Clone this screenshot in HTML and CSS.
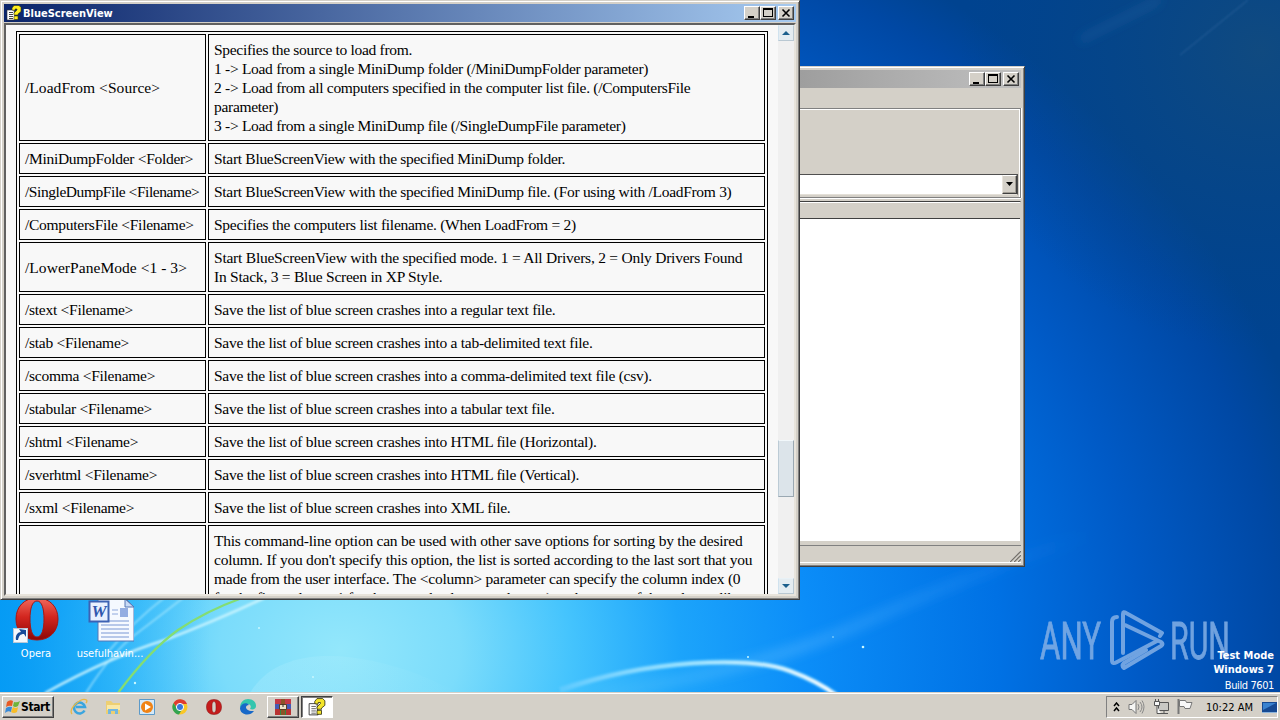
FILE: index.html
```html
<!DOCTYPE html>
<html lang="en">
<head>
  <meta charset="UTF-8" />
  <title>BlueScreenView</title>
  <link rel="stylesheet" href="styles.css">
</head>
<body>
  <div class="desktop">
    <svg class="wallpaper" viewBox="0 0 1280 720">
      <defs>
        <radialGradient id="sky" gradientUnits="userSpaceOnUse" cx="340" cy="650" r="1000" gradientTransform="translate(0 117) scale(1 .82)">
          <stop offset="0" stop-color="#93e7fb"/>
          <stop offset=".12" stop-color="#7bdcfb"/>
          <stop offset=".23" stop-color="#45c4fd"/>
          <stop offset=".34" stop-color="#1ca4fb"/>
          <stop offset=".47" stop-color="#0b8df8"/>
          <stop offset=".66" stop-color="#0071e4"/>
          <stop offset=".8" stop-color="#005ac6"/>
          <stop offset=".94" stop-color="#0048a4"/>
          <stop offset="1" stop-color="#004390"/>
        </radialGradient>
        <linearGradient id="left" x1="0" x2="1" y1="0" y2="0">
          <stop offset="0" stop-color="#0099f3" stop-opacity=".8"/>
          <stop offset="1" stop-color="#0099f3" stop-opacity="0"/>
        </linearGradient>
        <radialGradient id="corner" gradientUnits="userSpaceOnUse" cx="1260" cy="50" r="300">
          <stop offset="0" stop-color="#104a80"/>
          <stop offset="1" stop-color="#044485" stop-opacity="0"/>
        </radialGradient>
        <linearGradient id="ray" x1="0" x2="1" y1="0" y2="0">
          <stop offset="0" stop-color="#9de6ff" stop-opacity=".05"/>
          <stop offset=".4" stop-color="#5ab8ff" stop-opacity=".35"/>
          <stop offset="1" stop-color="#3aa0ff" stop-opacity="0"/>
        </linearGradient>
        <linearGradient id="arc" x1="0" x2="1" y1="0" y2="0">
          <stop offset="0" stop-color="#fff" stop-opacity="0"/>
          <stop offset=".4" stop-color="#c8f6ff" stop-opacity=".6"/>
          <stop offset="1" stop-color="#fff"/>
        </linearGradient>
        <linearGradient id="hill" x1="0" x2="1" y1="0" y2="0">
          <stop offset="0" stop-color="#c6f4ff" stop-opacity=".22"/>
          <stop offset="1" stop-color="#c6f4ff" stop-opacity="0"/>
        </linearGradient>
        <filter id="soft"><feGaussianBlur stdDeviation="1"/></filter>
        <filter id="softer" x="-20%" y="-50%" width="140%" height="200%"><feGaussianBlur stdDeviation="5"/></filter>
      </defs>
      <rect width="1280" height="720" fill="url(#sky)"/>
      <rect width="210" height="720" fill="url(#left)"/>
      <rect x="900" width="380" height="360" fill="url(#corner)"/>
      <path d="M600 694Q760 670 865 622T1090 535" fill="none" stroke="url(#ray)" stroke-width="13" filter="url(#softer)"/>
      <path d="M1180 55L1248 0" stroke="#4a7cb4" stroke-opacity=".5" filter="url(#soft)"/>
      <path d="M1080 40L1160 0" stroke="#2a66a8" stroke-opacity=".4" stroke-width="6" filter="url(#softer)"/>
      <g fill="none" filter="url(#soft)">
        <path d="M45 693Q110 657 165 640Q215 621 264 598" stroke="#d5f8ff" stroke-opacity=".85" stroke-width="2.5"/>
        <path d="M86 693Q112 652 136 634Q165 612 183 598M108 652Q135 620 164 598" stroke="#c0f2ff" stroke-opacity=".7" stroke-width="1.5"/>
        <path d="M560 690C650 659 748 656 790 671Q817 681 836 695" stroke="#61ccff" stroke-opacity=".8" stroke-width="6"/>
        <path d="M560 690C650 659 748 656 790 671Q817 681 836 695" stroke="url(#arc)" stroke-width="3"/>
      </g>
      <path d="M250 693C275 650 340 645 420 675L460 693Z" fill="url(#hill)"/>
      <path d="M118 693Q150 650 178 630Q206 611 242 598" fill="none" stroke="#84dd72" stroke-width="2.2"/>
      <g fill="#c8f7ff">
        <circle cx="135" cy="683" r="1.2"/><circle cx="313" cy="677" r="1"/><circle cx="259" cy="628" r="1"/>
        <circle cx="748" cy="657" r="1"/><circle cx="863" cy="647" r="1.3"/><circle cx="833" cy="637" r=".7"/>
      </g>
    </svg>

    <div class="shortcut opera">
      <svg width="48" height="48" viewBox="0 0 48 48">
        <defs>
          <linearGradient id="red" x1="0" x2="0" y1="0" y2="1">
            <stop offset="0" stop-color="#f06a5e"/><stop offset=".45" stop-color="#d3261f"/><stop offset="1" stop-color="#8d0606"/>
          </linearGradient>
        </defs>
        <path fill="url(#red)" stroke="#a51715" fill-rule="evenodd" d="M25 3c13 0 21 9 21 21s-8 21-21 21S4 36 4 24 12 3 25 3zm0 3c-5 0-7 8-7 18s2 18 7 18 7-8 7-18-2-18-7-18z"/>
        <rect x="1.500" y="33.500" width="14" height="14" fill="#f4f8fc" stroke="#b8c8d8"/>
        <path d="M4 45c-1-5 2-8 5-8l-2-3 7 1v7l-2-3c-4 0-5 2-6 6z" fill="#174b9a"/>
      </svg>
      <span>Opera</span>
    </div>
    <div class="shortcut word">
      <svg width="48" height="48" viewBox="0 0 48 48">
        <path d="M12 4h28l8 8v34H12z" fill="#f5f9ff" stroke="#5676b4"/>
        <path d="M39 4v8h9z" fill="#c8daf5" stroke="#5676b4"/>
        <path d="M15 26h28M15 30h28M15 34h28M15 38h28M15 42h28" stroke="#7997d4"/>
        <path d="M26 15h6M26 19h6" stroke="#8ea8dc"/>
        <rect x="34" y="13" width="8" height="9" fill="#93ade2"/>
        <rect x="3.500" y="6.500" width="19" height="20" fill="#e8f0ff" stroke="#3c62b4" stroke-width="2"/>
        <text x="13" y="22" text-anchor="middle" class="w-mark">W</text>
      </svg>
      <span>usefulhavin...</span>
    </div>

    <svg class="watermark" width="200" height="64" viewBox="0 0 200 64">
      <text x="2" y="50" textLength="61" lengthAdjust="spacingAndGlyphs">ANY</text>
      <text x="132" y="50" textLength="60" lengthAdjust="spacingAndGlyphs">RUN</text>
      <g fill="none" stroke="#84b0e6" stroke-width="4" stroke-linejoin="round" stroke-linecap="round">
        <path d="M79 8q-5 0-5 5v38q0 5 5 2l40-21"/>
        <path d="M85 44V5q0-3 3-1l36 20-2 3M87 16l36 17q3 2 0 4L86 59q-3-2 0-5l22-13"/>
      </g>
    </svg>
    <div class="build"><b>Test Mode</b><b>Windows 7</b><span>Build 7601</span></div>

    <div class="window back">
      <div class="titlebar">
        <div class="caption">
          <i class="btn"><svg width="12" height="10"><path d="M2 8h6v2H2z"/></svg></i>
          <i class="btn"><svg width="12" height="10"><path fill-rule="evenodd" d="M1 0h10v9H1zM2 2v6h8V2z"/></svg></i>
          <i class="btn close"><svg width="12" height="10"><path d="M2.500 1.500l7 7M9.500 1.500l-7 7" stroke="#000" stroke-width="1.600"/></svg></i>
        </div>
      </div>
      <div class="toolbox">
        <div class="combo"><i class="drop"><svg width="9" height="5"><path d="M1 0h7L4.500 4z"/></svg></i></div>
      </div>
      <div class="list"><div class="list-head"></div></div>
      <div class="status">
        <svg width="13" height="13"><path d="M1 13L13 1M5 13l8-8M9 13l4-4" stroke="#fff"/><path d="M2 13L13 2M6 13l7-7M10 13l3-3" stroke="#77736c" stroke-width="1.400"/></svg>
      </div>
    </div>

    <div class="window main">
      <div class="titlebar">
        <svg class="help-icon" width="16" height="16" viewBox="0 0 16 16"><path d="M1 5h7l1 10H1z" fill="#fff" stroke="#333" stroke-width=".6"/><path d="M3 7.500h4M3 9.500h4M3 11.500h4M3 13.500h4" stroke="#444"/><path d="M6 5V3l2-2.500h5l2 2v4l-3 2.500v1H8V8l3-3V4H9v1.500zM8 11h4v3.500H8z" fill="#ffef20" stroke="#3c3900" stroke-width=".6"/></svg>
        <span class="title">BlueScreenView</span>
        <div class="caption">
          <i class="btn"><svg width="12" height="10"><path d="M2 8h6v2H2z"/></svg></i>
          <i class="btn"><svg width="12" height="10"><path fill-rule="evenodd" d="M1 0h10v9H1zM2 2v6h8V2z"/></svg></i>
          <i class="btn close"><svg width="12" height="10"><path d="M2.500 1.500l7 7M9.500 1.500l-7 7" stroke="#000" stroke-width="1.600"/></svg></i>
        </div>
      </div>
      <div class="client">
        <div class="page">
          <table>
            <tr class="tight"><td class="loose">/LoadFrom &lt;Source&gt;</td><td>Specifies the source to load from.<br>1 -&gt; Load from a single MiniDump folder (/MiniDumpFolder parameter)<br>2 -&gt; Load from all computers specified in the computer list file. (/ComputersFile<br>parameter)<br>3 -&gt; Load from a single MiniDump file (/SingleDumpFile parameter)</td></tr>
            <tr class="tight"><td>/MiniDumpFolder &lt;Folder&gt;</td><td>Start BlueScreenView with the specified MiniDump folder.</td></tr>
            <tr class="tight"><td class="tighter">/SingleDumpFile &lt;Filename&gt;</td><td>Start BlueScreenView with the specified MiniDump file. (For using with /LoadFrom 3)</td></tr>
            <tr><td>/ComputersFile &lt;Filename&gt;</td><td>Specifies the computers list filename. (When LoadFrom = 2)</td></tr>
            <tr class="wide"><td class="loose">/LowerPaneMode &lt;1 - 3&gt;</td><td>Start BlueScreenView with the specified mode. 1 = All Drivers, 2 = Only Drivers Found<br>In Stack, 3 = Blue Screen in XP Style.</td></tr>
            <tr><td>/stext &lt;Filename&gt;</td><td>Save the list of blue screen crashes into a regular text file.</td></tr>
            <tr><td>/stab &lt;Filename&gt;</td><td>Save the list of blue screen crashes into a tab-delimited text file.</td></tr>
            <tr><td>/scomma &lt;Filename&gt;</td><td>Save the list of blue screen crashes into a comma-delimited text file (csv).</td></tr>
            <tr><td>/stabular &lt;Filename&gt;</td><td>Save the list of blue screen crashes into a tabular text file.</td></tr>
            <tr><td>/shtml &lt;Filename&gt;</td><td>Save the list of blue screen crashes into HTML file (Horizontal).</td></tr>
            <tr><td>/sverhtml &lt;Filename&gt;</td><td>Save the list of blue screen crashes into HTML file (Vertical).</td></tr>
            <tr><td>/sxml &lt;Filename&gt;</td><td>Save the list of blue screen crashes into XML file.</td></tr>
            <tr class="last wide"><td></td><td>This command-line option can be used with other save options for sorting by the desired<br>column. If you don't specify this option, the list is sorted according to the last sort that you<br>made from the user interface. The &lt;column&gt; parameter can specify the column index (0<br>for the first column, 1 for the second column, and so on) or the name of the column, like</td></tr>
          </table>
        </div>
        <div class="scrollbar">
          <i class="arrow"><svg width="8" height="4"><path d="M0 4l4-4 4 4z"/></svg></i>
          <i class="thumb"></i>
          <i class="arrow"><svg width="8" height="4"><path d="M0 0l4 4 4-4z"/></svg></i>
        </div>
      </div>
    </div>

    <div class="taskbar">
      <div class="start">
        <svg width="17" height="16" viewBox="0 0 17 16"><path d="M3 3q3-3 6-1L8 7Q5 6 2 8z" fill="#e85a24"/><path d="M10 3q3 1 6-1l-2 5q-3 2-5 0z" fill="#6fb43a"/><path d="M2 9q3-2 6-1l-1 5q-3-2-6 1z" fill="#388ad8"/><path d="M9 8q3 2 5 0l-1 5q-3 2-6 0z" fill="#f8bd28"/></svg>
        Start
      </div>
      <div class="launch">
        <svg width="18" height="18" viewBox="0 0 18 18"><path d="M14.500 12.500a5.500 5.500 0 1 1 .5-3.500H6" fill="none" stroke="#3aa5df" stroke-width="2.600"/><path d="M2 16C-2 11 11-1 16.500 2q1 1-.5 3" fill="none" stroke="#e9b845" stroke-width="1.300"/></svg>
        <svg width="18" height="18" viewBox="0 0 18 18"><path d="M2 3h5l2 2h7v11H2z" fill="#edcf72"/><path d="M3 7h13v5H3z" fill="#f9e8a6"/><path d="M4 16v-5h10v5h-3v-3H7v3z" fill="#73b7df"/></svg>
        <svg width="18" height="18" viewBox="0 0 18 18"><path d="M1.500 1.500h15v15h-15z" fill="#d5e9f8" stroke="#5c9ac9"/><circle cx="9" cy="9" r="6" fill="#f08315"/><path d="M7 5.500L13 9l-6 3.500z" fill="#fff"/></svg>
        <svg width="18" height="18" viewBox="0 0 18 18"><circle cx="9" cy="9" r="7.500" fill="#f9c727"/><path d="M2.500 5A7.500 7.500 0 0 1 16 6H9L6 10z" fill="#df3c30"/><path d="M2.500 5A7.500 7.500 0 0 0 8 16.500l3-5-5-1z" fill="#32a450"/><circle cx="9" cy="9" r="3.600" fill="#3878dc" stroke="#fff"/></svg>
        <svg width="18" height="18" viewBox="0 0 18 18"><path fill="#c51c1c" stroke="#850c0c" stroke-width=".5" fill-rule="evenodd" d="M9 1.500c5 0 7.500 3 7.500 7.500s-2.500 7.500-7.500 7.500S1.500 13.500 1.500 9 4 1.500 9 1.500zm0 2C7 3.500 7 6 7 9s0 5.500 2 5.500 2-2.500 2-5.500 0-5.500-2-5.500z"/></svg>
        <svg width="18" height="18" viewBox="0 0 18 18"><path d="M1 10C1 4 5 1 9 1c5 0 8 3 8 7 0 3-3 4-6 3 2-3 0-5-3-5-4 0-6 2-7 4z" fill="#34c5ae"/><path d="M1 10c1-5 7-6 9-3-5 0-4 7 5 6-4 6-14 4-14-3z" fill="#1768c8"/></svg>
      </div>
      <div class="task">
        <svg width="18" height="18" viewBox="0 0 18 18"><path d="M1 1h16v5H1z" fill="#c33846"/><path d="M1 6h16v5H1z" fill="#4658b4"/><path d="M1 11h16v6H1z" fill="#338742"/><path d="M1 11h5v6H1zM12 11h5v6h-5z" fill="#b83232"/><path d="M7 1h4v16H7z" fill="#8c5427"/><path d="M5.500 6.500h7v5h-7z" fill="#eee3c8" stroke="#5a3d24"/><path d="M9 6v3" stroke="#333"/></svg>
      </div>
      <div class="task active">
        <svg width="18" height="18" viewBox="0 0 16 16"><path d="M1 5h7l1 10H1z" fill="#fff" stroke="#333" stroke-width=".8"/><path d="M3 7.500h4M3 9.500h4M3 11.500h4M3 13.500h4" stroke="#555" stroke-width=".8"/><path d="M6 5V3l2-2.500h5l2 2v4l-3 2.500v1H8V8l3-3V4H9v1.500zM8 11h4v3.500H8z" fill="#f4e52a" stroke="#28260a" stroke-width=".7"/></svg>
      </div>
      <div class="tray">
        <svg width="7" height="10" viewBox="0 0 7 10"><path d="M1 4l2.500-3L6 4M1 9l2.500-3L6 9" fill="none" stroke="#000" stroke-width="1.500"/></svg>
        <svg width="17" height="16" viewBox="0 0 17 16"><path d="M1 5.500h3L8 1.500v13l-4-4H1z" fill="#f6f6f4" stroke="#777"/><path d="M10 5q2 3 0 6M12 3q4 5 0 10M14 1.500q4 6 0 13" fill="none" stroke="#888"/></svg>
        <svg width="16" height="16" viewBox="0 0 16 16"><path d="M5.500 3.500h10v8h-10zM7 14.500h8M11 12v2" fill="#c9c9c5" stroke="#555"/><path d="M1.500 2.500h5v4h-5zM2.500 0v2M5.500 0v2M4 7v7.500h4" fill="#f8f8f8" stroke="#555"/></svg>
        <svg width="16" height="16" viewBox="0 0 16 16"><path d="M1.500 0v15" stroke="#777" stroke-width="2"/><path d="M2.500 1.500h6l1 2h5.500l-2 6H8l-1-2H2.500z" fill="#f8f8f8" stroke="#777"/></svg>
        <span class="clock">10:22 AM</span>
        <svg class="show" width="15" height="13" viewBox="0 0 15 13"><path d="M0 1h15v10H0z" fill="#164a93"/><path d="M1 2h13L1 9z" fill="#3a83d0"/><path d="M0 11h15v1H0z" fill="#8cb4dc"/></svg>
      </div>
    </div>
  </div>
</body>
</html>
```
FILE: styles.css
```css
* {
  box-sizing: border-box;
}

body {
  margin: 0;
  overflow: hidden;
  font-family: "DejaVu Sans Condensed", "DejaVu Sans", sans-serif;
  font-size: 11px;
}

svg {
  display: block;
  flex: none;
}

.desktop {
  position: relative;
  width: 1280px;
  height: 720px;
  overflow: hidden;
}

.wallpaper {
  position: absolute;
  inset: 0;
}

/* desktop items */
.shortcut {
  position: absolute;
  top: 595px;
  width: 76px;
  display: flex;
  flex-direction: column;
  align-items: center;
  gap: 4px;
  color: #fff;
  line-height: 13px;
  white-space: nowrap;
}

.shortcut.opera {
  left: -2px;
}

.shortcut.word {
  left: 72px;
}

.w-mark {
  font: italic bold 17px "Liberation Serif", serif;
  fill: #2f57ae;
}

.watermark {
  position: absolute;
  left: 1038px;
  top: 609px;
  overflow: visible;
  opacity: .85;
}

.watermark text {
  font-family: Roboto, sans-serif;
  font-size: 52px;
  fill: #84b0e6;
  stroke: #84b0e6;
  stroke-width: .8px;
}

.build {
  position: absolute;
  right: 6px;
  top: 649px;
  display: flex;
  flex-direction: column;
  align-items: flex-end;
  color: #fff;
  line-height: 14px;
}

.build span {
  margin-top: 2px;
  letter-spacing: -0.4px;
}

/* windows */
.window {
  position: absolute;
  display: flex;
  flex-direction: column;
  padding: 3px;
  background: #d4d0c8;
  border: 1px solid;
  border-color: #d4d0c8 #404040 #404040 #d4d0c8;
  box-shadow: inset 1px 1px #fff, inset -1px -1px #808080;
}

.window.main {
  left: 0;
  top: 0;
  width: 800px;
  height: 600px;
}

.window.back {
  left: 600px;
  top: 66px;
  width: 425px;
  height: 501px;
}

.titlebar {
  display: flex;
  align-items: center;
  flex: none;
  height: 18px;
  padding: 0 2px;
  background: linear-gradient(90deg, #0a246a, #a6caf0);
  color: #fff;
  font-weight: bold;
}

.back .titlebar {
  background: linear-gradient(90deg, #808080, #c0c0c0);
}

.title {
  margin-left: 1px;
}

.caption {
  display: flex;
  margin-left: auto;
}

.btn {
  width: 16px;
  height: 14px;
  padding: 1px;
  background: #d4d0c8;
  border: 1px solid;
  border-color: #fff #404040 #404040 #fff;
  box-shadow: inset -1px -1px #808080;
}

.btn.close {
  margin-left: 2px;
}

.client {
  display: flex;
  flex: 1;
  min-height: 0;
  margin-top: 1px;
  border: 2px solid;
  border-color: #606060 #e8e4dc #e8e4dc #606060;
  background: #f8f8f8;
}

.page {
  flex: 1;
  overflow: hidden;
  padding: 6px 0 0 10px;
}

table {
  width: 752px;
  table-layout: fixed;
  border: 1px solid #000;
  border-collapse: separate;
  border-spacing: 2px;
  font: 15.5px/19px "Liberation Serif", serif;
  letter-spacing: -0.27px;
  color: #000;
}

td {
  padding: 5px;
  border: 1px solid #000;
  white-space: nowrap;
}

td:first-child {
  width: 187px;
}

.tight {
  letter-spacing: -0.3px;
}

.tighter {
  letter-spacing: -0.44px;
}

.wide {
  letter-spacing: -0.23px;
}

.loose {
  letter-spacing: 0.05px;
}

.last td {
  height: 107px;
  vertical-align: top;
}

.scrollbar {
  display: flex;
  flex-direction: column;
  justify-content: space-between;
  width: 16px;
  background: #f0f0f0;
}

.arrow {
  display: flex;
  align-items: center;
  justify-content: center;
  height: 16px;
  background: #e4ecf1;
  border: 1px solid #b9c8d2;
  border-top-color: #e8f1f6;
  border-left-color: #d0e2ee;
  fill: #1c5f8c;
}

.thumb {
  height: 57px;
  margin: 290px 0 -28px;
  background: #dce4ea;
  border: 1px solid #9aa8b2;
  border-top-color: #f2f8fb;
  border-left-color: #bccbd5;
}

/* background window body */
.toolbox {
  display: flex;
  align-items: flex-end;
  flex: none;
  height: 90px;
  margin-top: 20px;
  padding: 0 2px 2px;
  border: 1px solid #808080;
  border-left: 0;
  box-shadow: inset 0 1px #fff, inset -1px 0 #fff, 0 1px #fff, 1px 0 #fff;
}

.combo {
  display: flex;
  justify-content: flex-end;
  flex: 1;
  height: 21px;
  background: #fff;
  border: 1px solid;
  border-color: #505050 #505050 #e4e0d8;
}

.drop {
  display: flex;
  align-items: center;
  justify-content: center;
  width: 15px;
  background: #d4d0c8;
  border: 1px solid;
  border-color: #fff #404040 #404040 #e8e4dc;
  box-shadow: inset -1px -1px #a09c94;
}

.list {
  flex: 1;
  margin-top: 3px;
  background: #fff;
  border: solid #d4d0c8;
  border-width: 0 1px 1px 0;
  border-top: 1px solid #404040;
}

.list-head {
  height: 17px;
  background: #d4d0c8;
  border-top: 1px solid #fff;
  border-bottom: 1px solid #404040;
}

.status {
  display: flex;
  justify-content: flex-end;
  align-items: flex-end;
  flex: none;
  height: 18px;
  margin-top: 3px;
  border-top: 1px solid #808080;
  border-bottom: 1px solid #fff;
}

/* taskbar */
.taskbar {
  position: absolute;
  left: 0;
  right: 0;
  bottom: 0;
  height: 28px;
  display: flex;
  align-items: flex-start;
  padding: 4px 2px 2px;
  background: #d4d0c8;
  box-shadow: inset 0 1px #d4d0c8, inset 0 2px #fff;
}

.start,
.task {
  display: flex;
  align-items: center;
  height: 22px;
  border: 1px solid;
  border-color: #fff #404040 #404040 #fff;
  box-shadow: inset -1px -1px #808080;
}

.start {
  width: 52px;
  padding-left: 1px;
  font-weight: bold;
  font-size: 12px;
  letter-spacing: -0.4px;
}

.launch {
  display: flex;
  gap: 15.8px;
  margin: 2px 10px 0 16px;
}

.task {
  width: 32px;
  justify-content: center;
}

.task.active {
  margin-left: 2px;
  background: #fff;
  border-color: #404040 #fff #fff #404040;
  box-shadow: inset 1px 1px #808080;
}

.tray {
  display: flex;
  align-items: center;
  width: 172px;
  height: 22px;
  margin-left: auto;
  padding-left: 6px;
  border: 1px solid;
  border-color: #808080 #fff #fff #808080;
}

.tray svg + svg {
  margin-left: 8px;
}

.clock {
  margin-left: 13px;
  white-space: nowrap;
}

.tray .show {
  margin-left: auto;
}
```
